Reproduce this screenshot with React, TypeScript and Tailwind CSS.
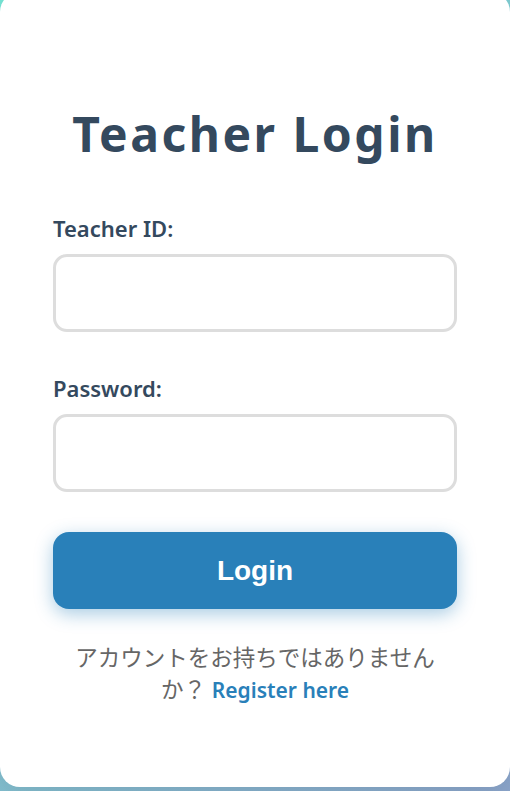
export default function App() {
  return (
    <div className="min-h-screen bg-[linear-gradient(135deg,#76e6d6,#8ca6cc)] font-['Noto_Sans','Noto_Sans_CJK_JP',sans-serif]">
      <div className="-mt-[8px] h-[795px] rounded-[20px] bg-white px-[53px] pt-[111px] shadow-[0_8px_30px_rgba(0,0,0,0.1)]">
        <h1 className="text-center text-[48px] font-bold tracking-[2.5px] text-[#34495e] leading-[62px]">
          Teacher Login
        </h1>
        <form className="mt-[48px] flex flex-col">
          <label className="text-[22px] font-semibold text-[#34495e] leading-[30px]">Teacher ID:</label>
          <input
            type="text"
            className="mt-[11px] h-[78px] rounded-[14px] border-[3px] border-[#dddddd] px-4 outline-none"
          />
          <label className="mt-[41px] text-[22px] font-semibold text-[#34495e] leading-[30px]">Password:</label>
          <input
            type="password"
            className="mt-[11px] h-[78px] rounded-[14px] border-[3px] border-[#dddddd] px-4 outline-none"
          />
          <button
            type="button"
            className="mt-[40px] h-[77px] rounded-[16px] bg-[#2980b9] font-['Liberation_Sans',Arial,sans-serif] text-[28px] font-bold text-white shadow-[0_5px_18px_rgba(41,128,185,0.4)]"
          >
            Login
          </button>
        </form>
        <p className="mt-[33px] px-[15px] text-center text-[22.5px] leading-[32px] text-[#666666]">
          アカウントをお持ちではありませんか？{' '}
          <a href="#" className="text-[21px] font-semibold text-[#2980b9]">Register here</a>
        </p>
      </div>
    </div>
  );
}
